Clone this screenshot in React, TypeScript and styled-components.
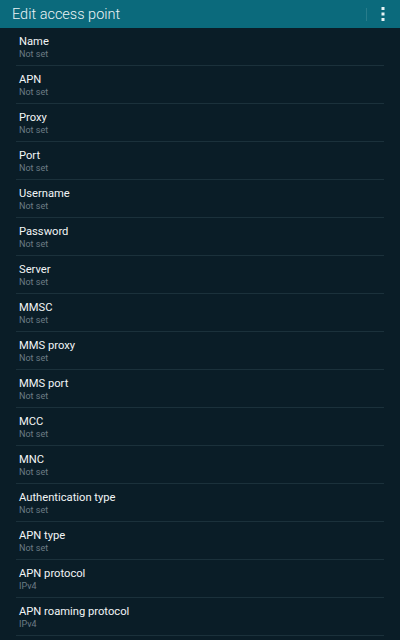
import React from "react";
import styled, { createGlobalStyle } from "styled-components";

const Global = createGlobalStyle`
  html, body { margin: 0; padding: 0; background: #0a1d27; }
  body { font-family: Roboto, "Noto Sans", sans-serif; overflow: hidden; }
`;

const Screen = styled.div`
  width: 400px;
  height: 640px;
  background: #0a1d27;
  display: flex;
  flex-direction: column;
  overflow: hidden;
`;

const Header = styled.header`
  height: 28px;
  flex: none;
  background: #0b6a7c;
  display: flex;
  align-items: center;
  padding: 0 0 0 12px;
`;

const Title = styled.h1`
  margin: 0;
  flex: 1;
  font-size: 14.5px;
  font-weight: 300;
  color: #eaf3f5;
  letter-spacing: 0;
`;

const Separator = styled.div`
  width: 1px;
  height: 13px;
  background: rgba(255, 255, 255, 0.12);
  margin-right: 14px;
`;

const MenuButton = styled.div`
  width: 19px;
  height: 28px;
  display: flex;
  align-items: center;
  justify-content: flex-start;
`;

const List = styled.div`
  display: flex;
  flex-direction: column;
  padding: 0 16px;
`;

const Row = styled.div`
  height: 38px;
  box-sizing: border-box;
  border-bottom: 1px solid #1b313b;
  padding: 7px 0 0 3px;
  display: flex;
  flex-direction: column;
`;

const Label = styled.div`
  font-size: 11.2px;
  line-height: 14px;
  color: #f2f5f6;
`;

const Value = styled.div`
  font-size: 9px;
  line-height: 11px;
  color: #6c7c85;
`;

const items: [string, string][] = [
  ["Name", "Not set"],
  ["APN", "Not set"],
  ["Proxy", "Not set"],
  ["Port", "Not set"],
  ["Username", "Not set"],
  ["Password", "Not set"],
  ["Server", "Not set"],
  ["MMSC", "Not set"],
  ["MMS proxy", "Not set"],
  ["MMS port", "Not set"],
  ["MCC", "Not set"],
  ["MNC", "Not set"],
  ["Authentication type", "Not set"],
  ["APN type", "Not set"],
  ["APN protocol", "IPv4"],
  ["APN roaming protocol", "IPv4"],
];

export default function App() {
  return (
    <Screen>
      <Global />
      <Header>
        <Title>Edit access point</Title>
        <Separator />
        <MenuButton>
          <svg width="4" height="14" viewBox="0 0 4 14">
            <rect x="0.5" y="0" width="3" height="3" fill="#e8f3f5" />
            <rect x="0.5" y="5.5" width="3" height="3" fill="#e8f3f5" />
            <rect x="0.5" y="11" width="3" height="3" fill="#e8f3f5" />
          </svg>
        </MenuButton>
      </Header>
      <List>
        {items.map(([label, value]) => (
          <Row key={label}>
            <Label>{label}</Label>
            <Value>{value}</Value>
          </Row>
        ))}
      </List>
    </Screen>
  );
}
